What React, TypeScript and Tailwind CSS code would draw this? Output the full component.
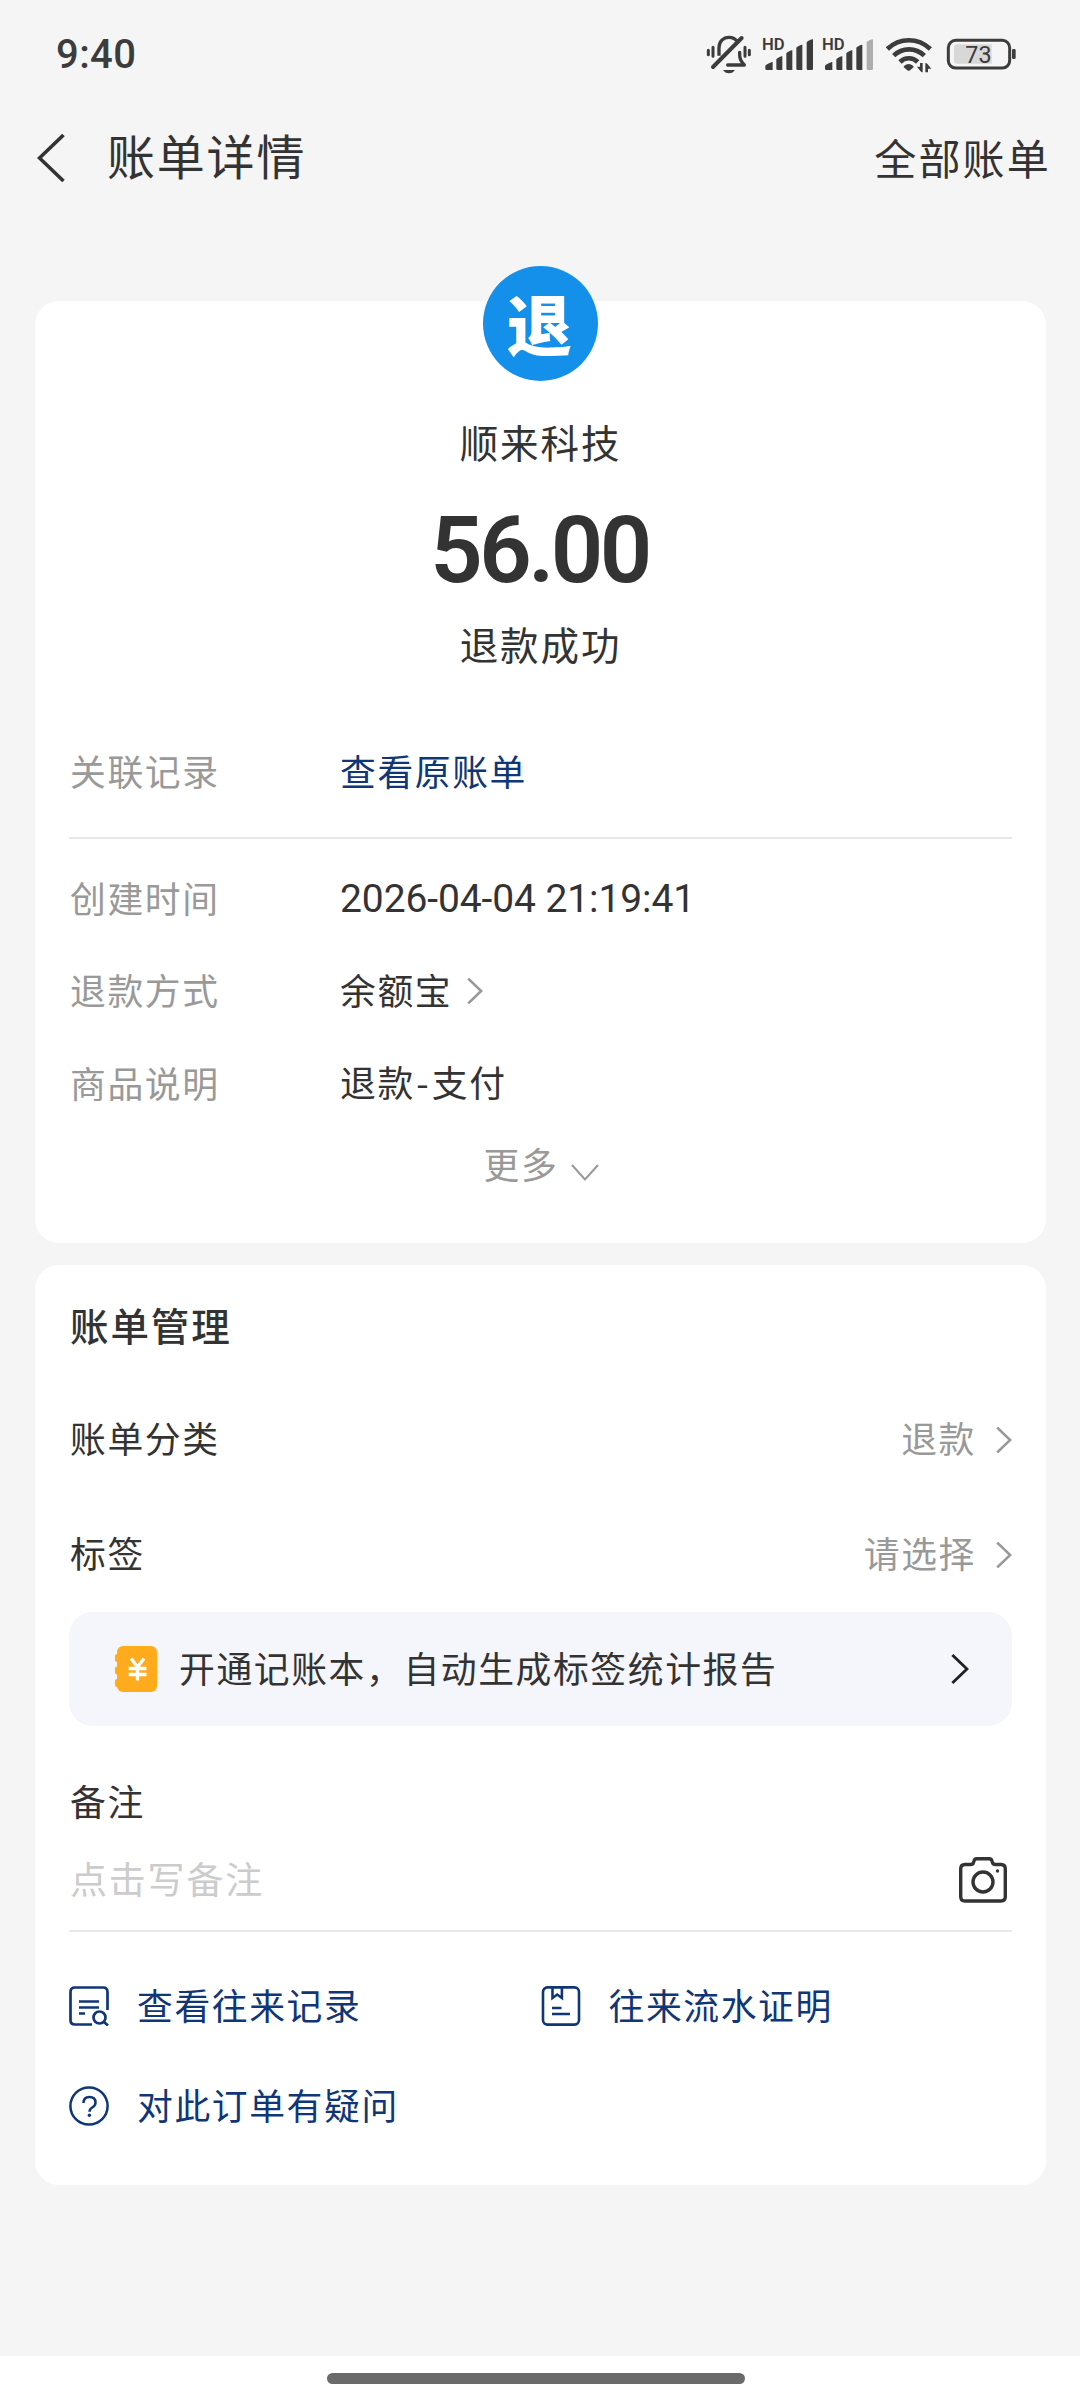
import type { ReactNode } from "react";
import clsx from "clsx";

const Chevron = ({
  className,
  width = 2.6,
}: {
  className?: string;
  width?: number;
}) => (
  <svg
    viewBox="0 0 16 26"
    fill="none"
    stroke="currentColor"
    strokeWidth={width}
    strokeLinejoin="miter"
    className={clsx("shrink-0", className)}
  >
    <path d="M1.2 .6 14.2 13 1.2 25.4" />
  </svg>
);

const BackIcon = () => (
  <svg viewBox="0 0 28 48" fill="none" stroke="#333" strokeWidth="3.6" className="h-12 w-7 shrink-0">
    <path d="M26.5 1 2.5 24l24 23" />
  </svg>
);

// Muted bell, two signal meters, wifi and battery
const StatusIcons = () => (
  <svg viewBox="0 0 1020 210" className="h-[70px] w-[340px] tracking-normal" fill="#3c3c3c">
    <g fill="none" stroke="#3c3c3c" strokeLinecap="round">
      <path strokeWidth="9" d="M55 91v13M178 91v13M69 82v27M165 82v27" />
      <path strokeWidth="10" strokeLinecap="butt" d="M87 107V84c0-20 13-32 30-32 12 0 20 5 25 13" />
      <path strokeWidth="10" strokeLinejoin="round" d="M149 97v9c0 14 7 22 14 29h-50" />
      <path strokeWidth="12" d="M69 141 155 54" />
    </g>
    <path d="M99 150h36c-4 6-10 10-18 10s-14-4-18-10z" />

    <text x="216" y="90" className="font-['Roboto',sans-serif] text-[50px] font-semibold">
      HD
    </text>
    <path d="M226 138c0-4 18-12 22-12v24h-18q-4 0-4-4zM259 118c3-4 14-9 18-9v41h-14q-4 0-4-4zM289 100c3-4 14-9 18-9v59h-14q-4 0-4-4zM319 83c3-4 14-9 18-9v76h-14q-4 0-4-4zM350 67c3-4 14-9 19-9v88q0 4-4 4h-11q-4 0-4-4z" />

    <text x="396" y="90" className="font-['Roboto',sans-serif] text-[50px] font-semibold">
      HD
    </text>
    <path d="M405 138c0-4 18-12 22-12v24h-18q-4 0-4-4zM439 118c3-4 14-9 18-9v41h-14q-4 0-4-4zM469 100c3-4 14-9 18-9v59h-14q-4 0-4-4zM499 83c3-4 14-9 18-9v76h-14q-4 0-4-4z" />
    <path fill="#adadad" d="M530 67c3-4 14-9 19-9v88q0 4-4 4h-11q-4 0-4-4z" />

    <g fill="none" stroke="#3c3c3c" strokeWidth="14">
      <path d="M592 87C629 52 684 52 721 87" />
      <path d="M611 107C637 82 677 82 703 107" />
      <path d="M630 126C645 111 668 111 683 126" />
    </g>
    <path d="M642 138q14-12 28 0q2 3-1 5l-9 8q-4 3-8 0l-9-8q-3-2-1-5z" />
    <path d="M690 129h8v28q-4 0-7-4l-10-13h9zM706 157v-28q4 0 7 4l11 13h-10v11z" />

    <rect x="775" y="61" width="184" height="83" rx="22" fill="none" stroke="#3c3c3c" strokeWidth="9" />
    <path fill="#d8d8d8" d="M802 73h103v58H802q-10 0-10-10V83q0-10 10-10z" />
    <rect x="966" y="87" width="11" height="30" rx="4" />
    <text x="826" y="128" className="font-['Roboto',sans-serif] text-[70px]">
      73
    </text>
  </svg>
);

const LedgerIcon = () => (
  <svg viewBox="0 0 42 46" className="h-[46px] w-[42px] shrink-0">
    <rect x="2" y="0" width="40" height="46" rx="6" fill="#ffab1c" />
    <path
      d="M2 10v4M2 22.500v4M2 35v4"
      stroke="#ffab1c"
      strokeWidth="4"
      strokeLinecap="round"
    />
    <path
      d="M16 12.500 22.500 21l6.500-8.500M22.500 21v13.500M13.500 22.500h18M13.500 28.500h18"
      fill="none"
      stroke="#fff"
      strokeWidth="3.400"
    />
  </svg>
);

const CameraIcon = () => (
  <svg viewBox="0 0 48 46" fill="none" stroke="#333" className="h-[46px] w-12 shrink-0">
    <path
      strokeWidth="3.4"
      strokeLinejoin="round"
      d="M6 7.500h5.500q2.500 0 3-2l.6-1.800q.6-2 2.600-2h12.600q2 0 2.600 2l.6 1.800q.5 2 3 2H42q4.300 0 4.300 4.500v27.500q0 4.500-4.300 4.500H6q-4.300 0-4.300-4.500V12q0-4.500 4.300-4.500z"
    />
    <circle cx="24" cy="25" r="10" strokeWidth="3.4" />
    <circle cx="38.500" cy="14" r="1.700" fill="#333" stroke="none" />
  </svg>
);

const RecordIcon = () => (
  <svg viewBox="0 0 40 40" fill="none" stroke="currentColor" strokeWidth="2.700" className="size-10 shrink-0">
    <path d="M23 38.500H6q-4.500 0-4.500-4.500V6Q1.500 1.500 6 1.500h28q4.500 0 4.500 4.500v18" />
    <path d="M10 15.500h20M10 21.500h20M10 27.500h6" />
    <circle cx="30.500" cy="31.500" r="6" />
    <path d="m34.500 35.500 4.500 4" />
  </svg>
);

const ProofIcon = () => (
  <svg viewBox="0 0 40 40" fill="none" stroke="currentColor" strokeWidth="2.600" className="size-10 shrink-0">
    <rect x="2" y="1.400" width="36" height="37.200" rx="4.500" />
    <path d="M11.500 1.500v10.500l4.700-3.500 4.700 3.500V1.500M11 22h9.500M11 28h18" />
  </svg>
);

const HelpIcon = () => (
  <svg viewBox="0 0 40 40" fill="none" stroke="currentColor" strokeWidth="2.500" className="size-10 shrink-0">
    <circle cx="20" cy="20" r="18.600" />
    <path d="M14.500 17q0-6 6-6t6 5.500q0 3-3 4.800t-3 4.500" />
    <circle cx="20.400" cy="29.300" r="1.700" fill="currentColor" stroke="none" />
  </svg>
);

const DetailRow = ({
  label,
  className,
  children,
}: {
  label: string;
  className?: string;
  children: ReactNode;
}) => (
  <div className={clsx("flex h-[60px] items-center", className)}>
    <span className="w-[271px] shrink-0 pb-[3px] pl-px text-[#999]">{label}</span>
    {children}
  </div>
);

const SettingRow = ({
  label,
  value,
  className,
}: {
  label: string;
  value: string;
  className?: string;
}) => (
  <div className={clsx("flex h-[60px] items-center pt-px", className)}>
    <span className="pb-[3px] pl-px">{label}</span>
    <span className="ml-auto pb-[3px] text-[#999]">{value}</span>
    <Chevron className="ml-5 h-[26px] w-4 text-[#999]" />
  </div>
);

const LinkItem = ({ icon, label }: { icon: ReactNode; label: string }) => (
  <div className="flex h-[60px] items-center gap-7">
    {icon}
    <span className="pb-[3px]">{label}</span>
  </div>
);

export default function App() {
  return (
    <div className="flex h-[2400px] w-[1080px] flex-col overflow-hidden bg-[#f5f5f5] font-['Noto_Sans_CJK_SC',sans-serif] text-[35.8px] leading-none tracking-[1.6px] whitespace-nowrap text-[#333]">
      {/* Status bar */}
      <div className="flex h-[110px] shrink-0 items-center justify-between pr-[50px] pl-14">
        <span className="font-['Roboto',sans-serif] text-[40px] font-medium tracking-[0.4px] text-[#3c3c3c]">
          9:40
        </span>
        <StatusIcons />
      </div>

      {/* Header */}
      <div className="flex h-24 shrink-0 items-center pr-[29px] pl-[37px]">
        <BackIcon />
        <h1 className="ml-[42px] pb-2 text-[48px] tracking-[1.8px]">账单详情</h1>
        <span className="ml-auto pb-[3px] text-[42px] tracking-[2.2px]">全部账单</span>
      </div>

      {/* Refund details */}
      <section className="mt-[95px] ml-[35px] flex h-[942px] w-[1011px] shrink-0 flex-col rounded-[24px] bg-white px-[34px]">
        <div className="-mt-[35px] flex size-[115px] shrink-0 items-center justify-center self-center rounded-full bg-[#1490ea] pr-0.5 pb-[3px] text-[65px] font-black tracking-normal text-white">
          退
        </div>
        <div className="mt-8 flex h-[60px] items-center justify-center pb-1 text-[38.5px] tracking-[1.9px]">
          顺来科技
        </div>
        <div className="mt-[26px] flex h-[100px] items-center justify-center pt-[3px] pr-0.5 font-['Roboto',sans-serif] text-[92px] font-semibold tracking-[-3.6px]">
          56.00
        </div>
        <div className="mt-[17px] flex h-[60px] items-center justify-center pb-1.5 text-[38.5px] tracking-[1.9px]">
          退款成功
        </div>

        <DetailRow label="关联记录" className="mt-[66px]">
          <span className="pb-[3px] text-[#0f3677]">查看原账单</span>
        </DetailRow>
        <div className="mt-[35px] h-0.5 bg-[#e8e8e8]" />
        <DetailRow label="创建时间" className="mt-[30px]">
          <span className="font-['Roboto',sans-serif] text-[39px] tracking-[-0.1px]">
            2026-04-04 21:19:41
          </span>
        </DetailRow>
        <DetailRow label="退款方式" className="mt-8">
          <span className="pb-[3px]">余额宝</span>
          <Chevron className="ml-[15px] h-[26px] w-4 text-[#999]" />
        </DetailRow>
        <DetailRow label="商品说明" className="mt-[33px]">
          <span className="pb-1">
            退款<span className="px-[1.5px]">-</span>支付
          </span>
        </DetailRow>
        <div className="mt-[22px] flex h-[60px] items-center justify-center pl-0.5 text-[#999]">
          <span className="pb-1">更多</span>
          <svg
            viewBox="0 0 28 17"
            fill="none"
            stroke="currentColor"
            strokeWidth="2"
            className="mt-3 ml-[13px] h-[17px] w-7"
          >
            <path d="M1 1 14 15.500 27 1" />
          </svg>
        </div>
      </section>

      {/* Bill management */}
      <section className="mt-[22px] ml-[35px] h-[920px] w-[1011px] shrink-0 rounded-[24px] bg-white px-[34px] pt-[31px]">
        <h2 className="flex h-[60px] items-center pb-1 pl-px text-[38.5px] font-medium tracking-[1.9px]">
          账单管理
        </h2>
        <SettingRow label="账单分类" value="退款" className="mt-[53px]" />
        <SettingRow label="标签" value="请选择" className="mt-[55px]" />

        <div className="mt-7 flex h-[114px] items-center rounded-[24px] bg-[#f5f6fb] pr-[43px] pl-[46px]">
          <LedgerIcon />
          <span className="ml-[22px] pb-[3px]">开通记账本，自动生成标签统计报告</span>
          <Chevron className="ml-auto h-[30px] w-[18px] text-[#222]" width={2.6} />
        </div>

        <div className="mt-[46px] flex h-[60px] items-center pb-[3px] pl-px">备注</div>
        <div className="mt-[18px] flex h-[60px] items-center justify-between pr-[5px]">
          <span className="pb-[3px] pl-px text-[37px] tracking-[1.8px] text-[#ccc]">点击写备注</span>
          <CameraIcon />
        </div>
        <div className="mt-5 h-0.5 bg-[#e8e8e8]" />

        <div className="mt-11 grid grid-cols-2 gap-y-10 text-[#0f3677]">
          <LinkItem icon={<RecordIcon />} label="查看往来记录" />
          <LinkItem icon={<ProofIcon />} label="往来流水证明" />
          <LinkItem icon={<HelpIcon />} label="对此订单有疑问" />
        </div>
      </section>

      {/* Gesture bar */}
      <div className="mt-auto flex h-11 shrink-0 justify-center bg-white pt-[17px] pr-2">
        <div className="h-[11px] w-[418px] rounded-full bg-[#6a6a6a]" />
      </div>
    </div>
  );
}
